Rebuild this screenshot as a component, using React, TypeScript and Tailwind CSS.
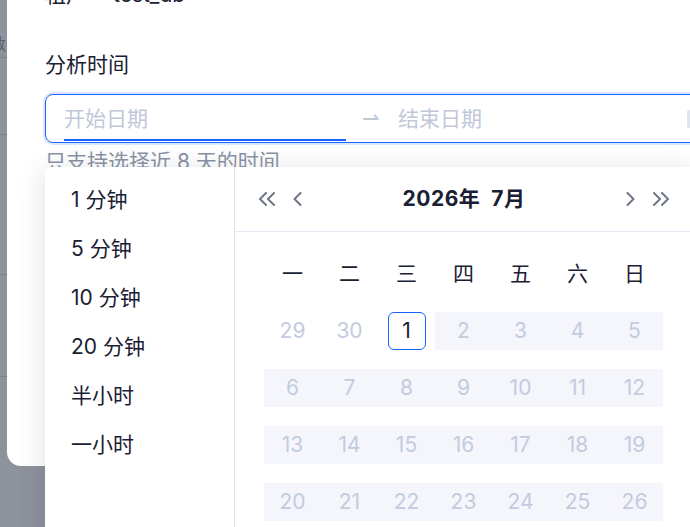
const presets = ["1 分钟", "5 分钟", "10 分钟", "20 分钟", "半小时", "一小时"];
const weekdays = ["一", "二", "三", "四", "五", "六", "日"];

const rows = [
  ["29", "30", "1", "2", "3", "4", "5"],
  ["6", "7", "8", "9", "10", "11", "12"],
  ["13", "14", "15", "16", "17", "18", "19"],
  ["20", "21", "22", "23", "24", "25", "26"],
];

const font = "font-['Inter','Noto_Sans_CJK_SC',sans-serif]";

// thin chevrons, drawn to match the picker's arrows
function Chev({ dir, double }: { dir: "l" | "r"; double?: boolean }) {
  const w = double ? 18 : 9;
  const pts = double
    ? dir === "l"
      ? ["8,1 2,7 8,13", "16,1 10,7 16,13"]
      : ["2,1 8,7 2,13", "10,1 16,7 10,13"]
    : dir === "l"
      ? ["7.5,1 1.5,7 7.5,13"]
      : ["1.5,1 7.5,7 1.5,13"];
  return (
    <svg width={w} height={14} viewBox={`0 0 ${w} 14`} fill="none" stroke="#6f7789" strokeWidth={2} strokeLinecap="round" strokeLinejoin="round">
      {pts.map((p) => (
        <polyline key={p} points={p} />
      ))}
    </svg>
  );
}

function Calendar() {
  return (
    <div className="flex-1 flex flex-col">
      {/* header */}
      <div className="h-[65px] border-b border-[#e3e8f2] flex items-center px-[23px]">
        <Chev dir="l" double />
        <div className="ml-[17px]">
          <Chev dir="l" />
        </div>
        <div className="flex-1 text-center text-[21px] font-bold text-[#1a2033] tracking-[0.5px]">
          2026年&nbsp;&nbsp;7月
        </div>
        <Chev dir="r" />
        <div className="ml-[17px]">
          <Chev dir="r" double />
        </div>
      </div>
      {/* body */}
      <div className="pl-[29px] pt-[13px]">
        <div className="grid grid-cols-[repeat(7,57px)] h-[57px] items-center text-[21px] text-[#1a2033]">
          {weekdays.map((w) => (
            <div key={w} className="text-center">{w}</div>
          ))}
        </div>
        {rows.map((r, ri) => (
          <div key={ri} className="grid grid-cols-[repeat(7,57px)] h-[57px] items-center text-[21px] text-[#c3cbdf]">
            {r.map((d, ci) => {
              const band = ri > 0 || ci > 2;
              const selected = ri === 0 && ci === 2;
              return (
                <div key={d} className={`h-[38px] flex items-center justify-center ${band ? "bg-[#f4f6fb]" : ""}`}>
                  {selected ? (
                    <div className="w-[38px] h-[38px] rounded-[6px] border border-[#1664ff] flex items-center justify-center text-[#1a2033]">
                      {d}
                    </div>
                  ) : (
                    d
                  )}
                </div>
              );
            })}
          </div>
        ))}
      </div>
    </div>
  );
}

export default function App() {
  return (
    <div className={`relative w-[690px] h-[527px] overflow-hidden bg-[#8e929d] flex ${font}`}>
      {/* table lines behind overlay */}
      <div className="w-[7px] flex flex-col">
        <div className="h-[58px] border-b border-[#7c808b] text-[16px] text-[#5d616b] leading-none pt-[36px] -ml-[10px] overflow-hidden">数</div>
        <div className="h-[77px] border-b border-[#7c808b]" />
        <div className="h-[140px] border-b border-[#7c808b]" />
        <div className="h-[102px] border-b border-[#7c808b]" />
      </div>

      {/* modal */}
      <div className="w-[683px] h-[466px] bg-white rounded-bl-[14px] pl-[38px]">
        <div className="flex -mt-[15px] h-[20px] text-[21px] leading-[20px] text-[#1a2033]">
          <span className="w-[68px]">租户</span>
          <span>test_db</span>
        </div>

        <div className="mt-[46px] text-[21px] leading-[28px] text-[#1a2033]">分析时间</div>

        <div className="mt-[15px] h-[49px] w-[700px] rounded-[8px] border border-[#1664ff] ring-2 ring-[#dbe6ff] flex items-center text-[21px] text-[#c0c8da]">
          <div className="relative w-[282px] ml-[18px] h-full flex items-center">
            开始日期
            <div className="absolute left-0 right-0 bottom-[1px] h-[2px] bg-[#1664ff]" />
          </div>
          <span className="ml-[16px] w-[20px]">⇀</span>
          <span className="ml-[16px]">结束日期</span>
          <div className="ml-auto mr-[47px] w-[10px] h-[18px] rounded-[2px] bg-[#dfe4ee]" />
        </div>

        <div className="mt-[5px] text-[21px] leading-[28px] text-[#8a93a6]">只支持选择近 8 天的时间</div>
      </div>

      {/* dropdown popup */}
      <div className="absolute left-[45px] top-[167px] w-[648px] h-[380px] bg-white rounded-tl-[6px] shadow-[0_4px_28px_rgba(20,30,60,0.14)] flex">
        <div className="w-[190px] border-r border-[#dfe5f0] pt-[8px] pl-[26px]">
          {presets.map((p) => (
            <div key={p} className="h-[49px] flex items-center text-[21px] text-[#1a2033]">{p}</div>
          ))}
        </div>
        <Calendar />
      </div>
    </div>
  );
}
